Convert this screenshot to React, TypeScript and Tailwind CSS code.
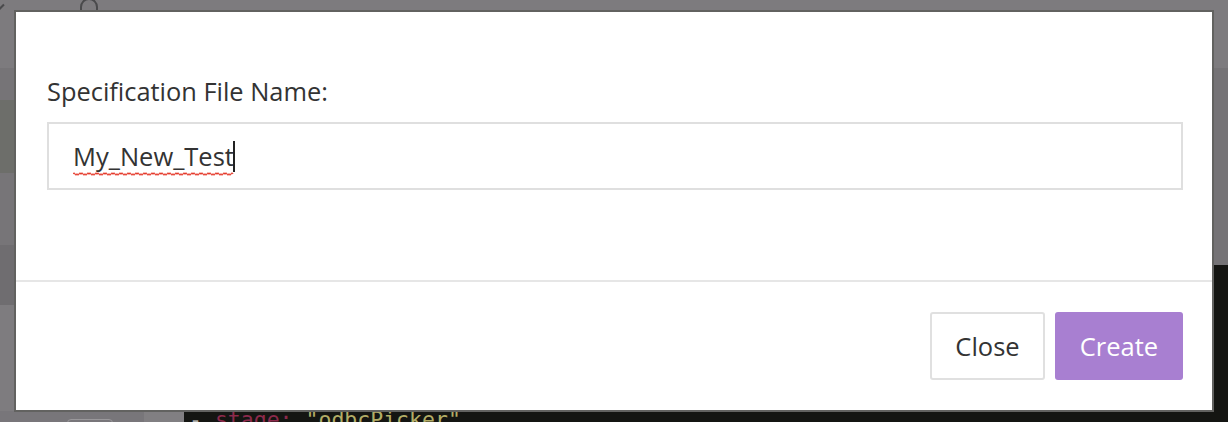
import React from "react";

export default function App() {
  const sans = { fontFamily: '"Source Sans Pro", "Open Sans", "Noto Sans", sans-serif' } as React.CSSProperties;
  return (
    <div className="relative w-[1228px] h-[422px] overflow-hidden bg-[#7c7a7d]">
      {/* dimmed background app */}
      <div className="absolute inset-0 flex flex-col">
        <div className="h-[68px] bg-[#7d7b7e] relative">
          <div className="absolute left-[80px] top-[-2px] w-[18px] h-[40px] rounded-t-full border-2 border-[#4a4a4c]" />
          <div className="absolute left-[-2px] top-[6px] w-[7px] h-[2px] rotate-[-45deg] bg-[#4a4a4c]" />
        </div>
        <div className="flex-1 flex">
          <div className="w-[14px] flex flex-col">
            <div className="h-[32px] bg-[#767477]" />
            <div className="h-[73px] bg-[#6d6e6a]" />
            <div className="h-[72px] bg-[#777578]" />
            <div className="h-[60px] bg-[#6f6d70]" />
            <div className="flex-1 bg-[#7e7c7f]" />
          </div>
          <div className="flex-1" />
          <div className="w-[16px] flex flex-col">
            <div className="h-[197px] bg-[#757376]" />
            <div className="flex-1 bg-[#141512]" />
          </div>
        </div>
        <div className="h-[11px] flex">
          <div className="w-[144px] bg-[#78767a] relative">
            <div className="absolute left-[67px] top-[8px] w-[46px] h-[10px] rounded-[4px] border border-[#9a989b]" />
          </div>
          <div className="w-[40px] bg-[#817f82]" />
          <div className="flex-1 bg-[#141512] overflow-hidden">
            <div
              className="mt-[-4px] ml-[5px] text-[21.5px] leading-[26px] whitespace-pre"
              style={{ fontFamily: '"DejaVu Sans Mono", "Liberation Mono", monospace' }}
            >
              <span className="text-[#b0b0ac]">- </span>
              <span className="text-[#8c2a4c]">stage:</span>
              <span className="text-[#b3ad66]"> "odbcPicker"</span>
            </div>
          </div>
        </div>
      </div>

      {/* modal */}
      <div
        className="absolute left-[14px] top-[10px] w-[1200px] h-[402px] border-2 border-[#626260] bg-white flex flex-col"
        style={sans}
      >
        <div className="h-[270px] border-b-2 border-[#e6e6e6] pl-[31px] pt-[62px] pr-[29px]">
          <div className="text-[25.4px] leading-[34px] text-[#333333]">Specification File Name:</div>
          <div className="mt-[14px] h-[68px] border-2 border-[#dfdfdf] flex items-center pl-[24px]">
            <span className="relative text-[25.5px] leading-[32px] text-[#333333]">
              My_New_Test
              <svg className="absolute left-0 bottom-[-4px]" width="161" height="5" viewBox="0 0 161 5">
                <path
                  d={"M0 3 " + Array.from({ length: 40 }, (_, i) => `Q${i * 4 + 1} ${i % 2 ? 5 : 1} ${i * 4 + 2} 3 T${i * 4 + 4} 3`).join(" ")}
                  fill="none"
                  stroke="#e53b2c"
                  strokeWidth="1.2"
                />
              </svg>
              <span className="absolute right-[-1px] top-[1px] w-[2px] h-[31px] bg-[#222]" />
            </span>
          </div>
        </div>
        <div className="flex-1 flex justify-end items-start pt-[30px] pr-[29px] gap-[10px]">
          <button className="w-[115px] h-[68px] rounded-[3px] border-2 border-[#e0e0e0] bg-white text-[25.5px] text-[#333333]">
            Close
          </button>
          <button className="w-[128px] h-[68px] rounded-[3px] bg-[#a87fd1] text-[25.5px] text-white">
            Create
          </button>
        </div>
      </div>
    </div>
  );
}
